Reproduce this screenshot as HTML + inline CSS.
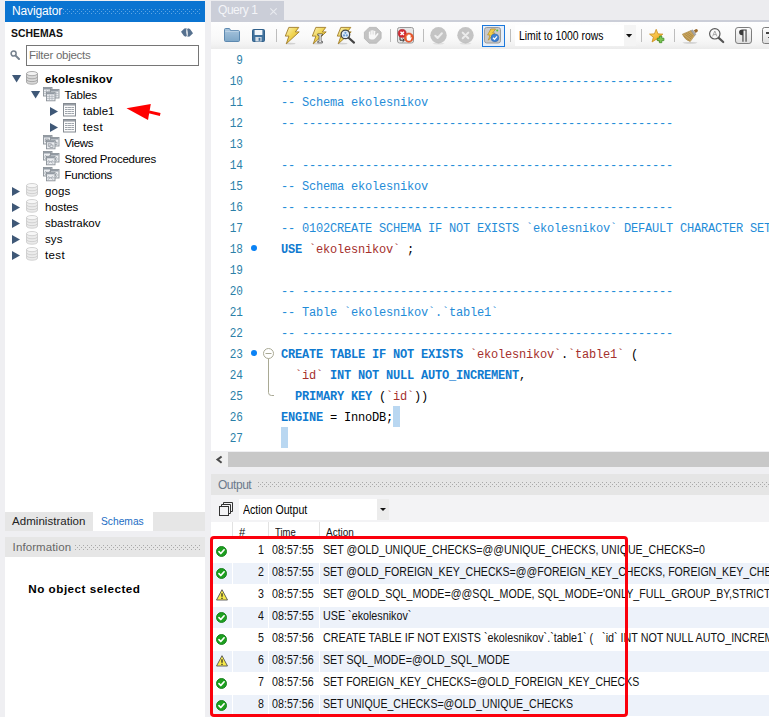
<!DOCTYPE html>
<html>
<head>
<meta charset="utf-8">
<style>
*{box-sizing:border-box;margin:0;padding:0}
html,body{width:769px;height:717px;overflow:hidden;background:#efeff2;font-family:"Liberation Sans",sans-serif;}
.abs{position:absolute}
#root{position:absolute;left:0;top:0;width:769px;height:717px;overflow:hidden;background:#efeff2}
.t{position:absolute;white-space:pre;transform-origin:0 50%;line-height:1}
/* left */
#navhead{left:5px;top:1px;width:200px;height:21px;background:#0b74d1}
#navbody{left:5px;top:22px;width:200px;height:490px;background:#fff}
#lefttabs{left:5px;top:512px;width:200px;height:19px;background:#e6e6e6}
#infohead{left:5px;top:537px;width:200px;height:20px;background:#e6e6e6}
#infobody{left:5px;top:557px;width:200px;height:160px;background:#fff}
.dots{position:absolute;height:7px;background-image:radial-gradient(circle,#b5b5b5 0.6px,transparent 0.9px);background-size:2px 2px}
.tree{font-size:12px;color:#111}
/* editor */
#tabbar{left:211px;top:0;width:558px;height:22px;background:#ececef}
#qtab{left:211px;top:1px;width:73px;height:20px;background:#cbced8}
#tabline{left:211px;top:20px;width:558px;height:1.7px;background:#cbced8}
#toolbar{left:211px;top:21.7px;width:558px;height:27.1px;background:linear-gradient(#fefefe 0%,#f9f9f9 60%,#f3f3f3 82%,#ebebeb 100%)}
#editor{left:211px;top:49px;width:558px;height:402px;background:#fff}
.ln{position:absolute;left:211px;width:32px;text-align:right;font-family:"Liberation Mono",monospace;font-size:12px;color:#2b7fa8;line-height:21px;height:21px;transform:scaleX(0.92);transform-origin:100% 50%}
.code{position:absolute;left:281px;font-family:"Liberation Mono",monospace;font-size:12px;letter-spacing:-0.2px;line-height:21px;height:21px;white-space:pre;color:#000}
.c{color:#1f8cd8}
.k{color:#0f7ad0;font-weight:bold}
.s{color:#a5302d}
.dot{position:absolute;left:251px;width:6px;height:6px;border-radius:3px;background:#0a82f5}
#hscroll{left:211px;top:451.6px;width:558px;height:15.3px;background:#f0f0f0}
#hthumb{left:228px;top:451.6px;width:541px;height:15.3px;background:#c8c8c8}
#outhead{left:211px;top:474px;width:558px;height:20.6px;background:#e5e5e5}
#outbar{left:211px;top:494.6px;width:558px;height:27.4px;background:#f3f3f5}
#outsel{left:239px;top:498.8px;width:150px;height:21px;background:#fff}
#outtable{left:211px;top:522px;width:558px;height:195px;background:#fff}
.row{position:absolute;left:211px;width:558px;height:22px}
.cell{position:absolute;top:0;height:21px;background:#edf2fa}
.ot{font-size:12px;color:#111}
.hl{background:#b9d7f1}
</style>
</head>
<body>
<div id="root">
<!-- LEFT -->
<div class="abs" id="navhead"></div>
<div class="abs" id="navbody"></div>
<div class="abs" id="lefttabs"></div>
<div class="abs" id="infohead"></div>
<div class="abs" id="infobody"></div>
<!-- EDITOR -->
<div class="abs" id="tabbar"></div>
<div class="abs" id="qtab"></div>
<div class="abs" id="tabline"></div>
<div class="abs" id="toolbar"></div>
<div class="abs" id="editor"></div>
<div class="abs" id="hscroll"></div>
<div class="abs" id="hthumb"></div>
<div class="abs" id="outhead"></div>
<div class="abs" id="outbar"></div>
<div class="abs" id="outsel"></div>
<div class="abs" id="outtable"></div>
<div class="t" id="m_k1" style="left:12px;top:5.20px;font-size:12px;color:#fff;letter-spacing:-0.151px;">Navigator</div>
<svg width="0" height="0" style="position:absolute"><defs><pattern id="dpb" width="4" height="4" patternUnits="userSpaceOnUse"><rect width="1" height="1" fill="#5fa6e4"/><rect x="2" y="2" width="1" height="1" fill="#5fa6e4"/></pattern><pattern id="dpg" width="4" height="4" patternUnits="userSpaceOnUse"><rect width="1" height="1" fill="#a9a9a9"/><rect x="2" y="2" width="1" height="1" fill="#a9a9a9"/></pattern></defs></svg>
<svg class="abs" style="left:63px;top:9px" width="137" height="5"><rect width="137" height="5" fill="url(#dpb)"/></svg>
<div class="t" id="m_k2" style="left:11px;top:28.00px;font-size:11.2px;color:#111;font-weight:bold;transform:scaleX(0.9293);">SCHEMAS</div>
<div class="abs" style="left:26px;top:45px;width:173px;height:20.5px;border:1px solid #767676;background:#fff"></div>
<div class="t" id="m_k3" style="left:29px;top:50.05px;font-size:11.5px;color:#6d6d6d;letter-spacing:-0.263px;">Filter objects</div>
<div class="t" id="m_k4" style="left:45px;top:74.05px;font-size:11.5px;color:#000;font-weight:bold;letter-spacing:0.151px;">ekolesnikov</div>
<div class="t" id="m_k5" style="left:64.5px;top:90.05px;font-size:11.5px;color:#000;letter-spacing:-0.125px;">Tables</div>
<div class="t" id="m_k6" style="left:83px;top:106.05px;font-size:11.5px;color:#000;letter-spacing:0.026px;">table1</div>
<div class="t" id="m_k7" style="left:83px;top:122.05px;font-size:11.5px;color:#000;letter-spacing:0.363px;">test</div>
<div class="t" id="m_k8" style="left:64.5px;top:138.05px;font-size:11.5px;color:#000;letter-spacing:-0.394px;">Views</div>
<div class="t" id="m_k9" style="left:64.5px;top:154.05px;font-size:11.5px;color:#000;letter-spacing:-0.258px;">Stored Procedures</div>
<div class="t" id="m_k10" style="left:64.5px;top:170.05px;font-size:11.5px;color:#000;letter-spacing:-0.262px;">Functions</div>
<div class="t" id="m_k11" style="left:45px;top:186.05px;font-size:11.5px;color:#000;letter-spacing:0.141px;">gogs</div>
<div class="t" id="m_k12" style="left:45px;top:202.05px;font-size:11.5px;color:#000;letter-spacing:-0.115px;">hostes</div>
<div class="t" id="m_k13" style="left:45px;top:218.05px;font-size:11.5px;color:#000;letter-spacing:-0.011px;">sbastrakov</div>
<div class="t" id="m_k14" style="left:45px;top:234.05px;font-size:11.5px;color:#000;letter-spacing:0.083px;">sys</div>
<div class="t" id="m_k15" style="left:45px;top:250.05px;font-size:11.5px;color:#000;letter-spacing:0.363px;">test</div>
<svg class="abs" style="left:12px;top:75px;overflow:visible" width="10" height="8" viewBox="0 0 10 8" ><path d="M0 0H9.2L4.6 7.6Z" fill="#3f5877"/></svg>
<svg class="abs" style="left:26px;top:71px;overflow:visible" width="12" height="14" viewBox="0 0 12 14" ><path d="M0.5 2.6V11C0.5 12.4 3 13.2 6 13.2S11.5 12.4 11.5 11V2.6Z" fill="#d9d9d9" stroke="#9b9b9b" stroke-width="0.8"/><path d="M0.5 5.6C0.5 7 3 7.8 6 7.8S11.5 7 11.5 5.6M0.5 8.4C0.5 9.8 3 10.6 6 10.6S11.5 9.8 11.5 8.4" fill="none" stroke="#9b9b9b" stroke-width="0.8"/><ellipse cx="6" cy="2.6" rx="5.5" ry="2.1" fill="#f2f2f2" stroke="#9b9b9b" stroke-width="0.8"/></svg>
<svg class="abs" style="left:31px;top:91.4px;overflow:visible" width="10" height="8" viewBox="0 0 10 8" ><path d="M0 0H9.2L4.6 7.6Z" fill="#3f5877"/></svg>
<svg class="abs" style="left:43px;top:87px;overflow:visible" width="16" height="14" viewBox="0 0 16 14" ><rect x="0.5" y="0.5" width="8.5" height="8.5" fill="#eceef1" stroke="#8b9198" stroke-width="0.9"/><rect x="1" y="1" width="7.5" height="1.5" fill="#929aa3"/><path d="M1 4.6h7.5M1 6.6h7.5M3.4 3v6M6 3v6" stroke="#aab0b8" stroke-width="0.7" fill="none"/><rect x="7.5" y="2.5" width="8.5" height="8.5" fill="#eceef1" stroke="#8b9198" stroke-width="0.9"/><rect x="8" y="3" width="7.5" height="1.5" fill="#929aa3"/><path d="M8 6.6h7.5M8 8.6h7.5M10.4 5v6M13 5v6" stroke="#aab0b8" stroke-width="0.7" fill="none"/><rect x="3.5" y="5.3" width="8.5" height="8.5" fill="#eceef1" stroke="#8b9198" stroke-width="0.9"/><rect x="4" y="5.8" width="7.5" height="1.5" fill="#929aa3"/><path d="M4 9.399999999999999h7.5M4 11.399999999999999h7.5M6.4 7.8v6M9 7.8v6" stroke="#aab0b8" stroke-width="0.7" fill="none"/></svg>
<svg class="abs" style="left:50px;top:107px;overflow:visible" width="8" height="9" viewBox="0 0 8 9" ><path d="M0 0L8 4.5L0 9Z" fill="#3f5877"/></svg>
<svg class="abs" style="left:63px;top:103px;overflow:visible" width="13" height="14" viewBox="0 0 13 14" ><rect x="0.5" y="0.5" width="12" height="12.5" fill="#fbfbfb" stroke="#858b92" stroke-width="1"/><rect x="1" y="1" width="11" height="1.6" fill="#9aa0a7"/><path d="M2 4.5h9M2 6.5h9M2 8.5h9M2 10.5h9" stroke="#9fa5ac" stroke-width="1"/><path d="M4.6 4v7.4M8.4 4v7.4" stroke="#fbfbfb" stroke-width="0.5" opacity="0.8"/></svg>
<svg class="abs" style="left:50px;top:123px;overflow:visible" width="8" height="9" viewBox="0 0 8 9" ><path d="M0 0L8 4.5L0 9Z" fill="#3f5877"/></svg>
<svg class="abs" style="left:63px;top:119px;overflow:visible" width="13" height="14" viewBox="0 0 13 14" ><rect x="0.5" y="0.5" width="12" height="12.5" fill="#fbfbfb" stroke="#858b92" stroke-width="1"/><rect x="1" y="1" width="11" height="1.6" fill="#9aa0a7"/><path d="M2 4.5h9M2 6.5h9M2 8.5h9M2 10.5h9" stroke="#9fa5ac" stroke-width="1"/><path d="M4.6 4v7.4M8.4 4v7.4" stroke="#fbfbfb" stroke-width="0.5" opacity="0.8"/></svg>
<svg class="abs" style="left:43px;top:135px;overflow:visible" width="16" height="14" viewBox="0 0 16 14" ><rect x="0.5" y="0.5" width="8.5" height="8.5" fill="#eceef1" stroke="#8b9198" stroke-width="0.9"/><rect x="1" y="1" width="7.5" height="1.5" fill="#929aa3"/><rect x="2.2" y="4" width="3" height="2.4" fill="none" stroke="#8a9098" stroke-width="0.7"/><rect x="4" y="5.2" width="3" height="2.4" fill="#e9ebee" stroke="#8a9098" stroke-width="0.7"/><rect x="7.5" y="2.5" width="8.5" height="8.5" fill="#eceef1" stroke="#8b9198" stroke-width="0.9"/><rect x="8" y="3" width="7.5" height="1.5" fill="#929aa3"/><rect x="9.2" y="6" width="3" height="2.4" fill="none" stroke="#8a9098" stroke-width="0.7"/><rect x="11" y="7.2" width="3" height="2.4" fill="#e9ebee" stroke="#8a9098" stroke-width="0.7"/><rect x="3.5" y="5.3" width="8.5" height="8.5" fill="#eceef1" stroke="#8b9198" stroke-width="0.9"/><rect x="4" y="5.8" width="7.5" height="1.5" fill="#929aa3"/><rect x="5.2" y="8.8" width="3" height="2.4" fill="none" stroke="#8a9098" stroke-width="0.7"/><rect x="7" y="10.0" width="3" height="2.4" fill="#e9ebee" stroke="#8a9098" stroke-width="0.7"/></svg>
<svg class="abs" style="left:43px;top:151px;overflow:visible" width="16" height="14" viewBox="0 0 16 14" ><rect x="0.5" y="0.5" width="8.5" height="8.5" fill="#eceef1" stroke="#8b9198" stroke-width="0.9"/><rect x="1" y="1" width="7.5" height="1.5" fill="#929aa3"/><path d="M2 4l2 2-2 2M7 4l-2 2 2 2M1 6h7.5" stroke="#9aa0a8" stroke-width="0.7" fill="none"/><rect x="7.5" y="2.5" width="8.5" height="8.5" fill="#eceef1" stroke="#8b9198" stroke-width="0.9"/><rect x="8" y="3" width="7.5" height="1.5" fill="#929aa3"/><path d="M9 6l2 2-2 2M14 6l-2 2 2 2M8 8h7.5" stroke="#9aa0a8" stroke-width="0.7" fill="none"/><rect x="3.5" y="5.3" width="8.5" height="8.5" fill="#eceef1" stroke="#8b9198" stroke-width="0.9"/><rect x="4" y="5.8" width="7.5" height="1.5" fill="#929aa3"/><path d="M5 8.8l2 2-2 2M10 8.8l-2 2 2 2M4 10.8h7.5" stroke="#9aa0a8" stroke-width="0.7" fill="none"/></svg>
<svg class="abs" style="left:43px;top:167px;overflow:visible" width="16" height="14" viewBox="0 0 16 14" ><rect x="0.5" y="0.5" width="8.5" height="8.5" fill="#eceef1" stroke="#8b9198" stroke-width="0.9"/><rect x="1" y="1" width="7.5" height="1.5" fill="#929aa3"/><path d="M2 4l2 2-2 2M7 4l-2 2 2 2M1 6h7.5" stroke="#9aa0a8" stroke-width="0.7" fill="none"/><rect x="7.5" y="2.5" width="8.5" height="8.5" fill="#eceef1" stroke="#8b9198" stroke-width="0.9"/><rect x="8" y="3" width="7.5" height="1.5" fill="#929aa3"/><path d="M9 6l2 2-2 2M14 6l-2 2 2 2M8 8h7.5" stroke="#9aa0a8" stroke-width="0.7" fill="none"/><rect x="3.5" y="5.3" width="8.5" height="8.5" fill="#eceef1" stroke="#8b9198" stroke-width="0.9"/><rect x="4" y="5.8" width="7.5" height="1.5" fill="#929aa3"/><path d="M5 8.8l2 2-2 2M10 8.8l-2 2 2 2M4 10.8h7.5" stroke="#9aa0a8" stroke-width="0.7" fill="none"/></svg>
<svg class="abs" style="left:12px;top:186.5px;overflow:visible" width="8" height="9" viewBox="0 0 8 9" ><path d="M0 0L8 4.5L0 9Z" fill="#3f5877"/></svg>
<svg class="abs" style="left:26px;top:183px;overflow:visible" width="12" height="14" viewBox="0 0 12 14" ><path d="M0.5 2.6V11C0.5 12.4 3 13.2 6 13.2S11.5 12.4 11.5 11V2.6Z" fill="#ebebeb" stroke="#c9c9c9" stroke-width="0.8"/><path d="M0.5 5.6C0.5 7 3 7.8 6 7.8S11.5 7 11.5 5.6M0.5 8.4C0.5 9.8 3 10.6 6 10.6S11.5 9.8 11.5 8.4" fill="none" stroke="#c9c9c9" stroke-width="0.8"/><ellipse cx="6" cy="2.6" rx="5.5" ry="2.1" fill="#f7f7f7" stroke="#c9c9c9" stroke-width="0.8"/></svg>
<svg class="abs" style="left:12px;top:202.5px;overflow:visible" width="8" height="9" viewBox="0 0 8 9" ><path d="M0 0L8 4.5L0 9Z" fill="#3f5877"/></svg>
<svg class="abs" style="left:26px;top:199px;overflow:visible" width="12" height="14" viewBox="0 0 12 14" ><path d="M0.5 2.6V11C0.5 12.4 3 13.2 6 13.2S11.5 12.4 11.5 11V2.6Z" fill="#ebebeb" stroke="#c9c9c9" stroke-width="0.8"/><path d="M0.5 5.6C0.5 7 3 7.8 6 7.8S11.5 7 11.5 5.6M0.5 8.4C0.5 9.8 3 10.6 6 10.6S11.5 9.8 11.5 8.4" fill="none" stroke="#c9c9c9" stroke-width="0.8"/><ellipse cx="6" cy="2.6" rx="5.5" ry="2.1" fill="#f7f7f7" stroke="#c9c9c9" stroke-width="0.8"/></svg>
<svg class="abs" style="left:12px;top:218.5px;overflow:visible" width="8" height="9" viewBox="0 0 8 9" ><path d="M0 0L8 4.5L0 9Z" fill="#3f5877"/></svg>
<svg class="abs" style="left:26px;top:215px;overflow:visible" width="12" height="14" viewBox="0 0 12 14" ><path d="M0.5 2.6V11C0.5 12.4 3 13.2 6 13.2S11.5 12.4 11.5 11V2.6Z" fill="#ebebeb" stroke="#c9c9c9" stroke-width="0.8"/><path d="M0.5 5.6C0.5 7 3 7.8 6 7.8S11.5 7 11.5 5.6M0.5 8.4C0.5 9.8 3 10.6 6 10.6S11.5 9.8 11.5 8.4" fill="none" stroke="#c9c9c9" stroke-width="0.8"/><ellipse cx="6" cy="2.6" rx="5.5" ry="2.1" fill="#f7f7f7" stroke="#c9c9c9" stroke-width="0.8"/></svg>
<svg class="abs" style="left:12px;top:234.5px;overflow:visible" width="8" height="9" viewBox="0 0 8 9" ><path d="M0 0L8 4.5L0 9Z" fill="#3f5877"/></svg>
<svg class="abs" style="left:26px;top:231px;overflow:visible" width="12" height="14" viewBox="0 0 12 14" ><path d="M0.5 2.6V11C0.5 12.4 3 13.2 6 13.2S11.5 12.4 11.5 11V2.6Z" fill="#ebebeb" stroke="#c9c9c9" stroke-width="0.8"/><path d="M0.5 5.6C0.5 7 3 7.8 6 7.8S11.5 7 11.5 5.6M0.5 8.4C0.5 9.8 3 10.6 6 10.6S11.5 9.8 11.5 8.4" fill="none" stroke="#c9c9c9" stroke-width="0.8"/><ellipse cx="6" cy="2.6" rx="5.5" ry="2.1" fill="#f7f7f7" stroke="#c9c9c9" stroke-width="0.8"/></svg>
<svg class="abs" style="left:12px;top:250.5px;overflow:visible" width="8" height="9" viewBox="0 0 8 9" ><path d="M0 0L8 4.5L0 9Z" fill="#3f5877"/></svg>
<svg class="abs" style="left:26px;top:247px;overflow:visible" width="12" height="14" viewBox="0 0 12 14" ><path d="M0.5 2.6V11C0.5 12.4 3 13.2 6 13.2S11.5 12.4 11.5 11V2.6Z" fill="#ebebeb" stroke="#c9c9c9" stroke-width="0.8"/><path d="M0.5 5.6C0.5 7 3 7.8 6 7.8S11.5 7 11.5 5.6M0.5 8.4C0.5 9.8 3 10.6 6 10.6S11.5 9.8 11.5 8.4" fill="none" stroke="#c9c9c9" stroke-width="0.8"/><ellipse cx="6" cy="2.6" rx="5.5" ry="2.1" fill="#f7f7f7" stroke="#c9c9c9" stroke-width="0.8"/></svg>
<svg class="abs" style="left:0;top:0" width="205" height="130"><path d="M126.5 108.3L150.8 104.1L148 119.9Z" fill="#ff0000"/><path d="M149 111.9L160.2 114.5" stroke="#ff0000" stroke-width="2.9"/></svg>
<svg class="abs" style="left:10px;top:50px;overflow:visible" width="11" height="11" viewBox="0 0 11 11" ><circle cx="3.6" cy="3.6" r="2.5" fill="none" stroke="#76828f" stroke-width="1.5"/><path d="M5.6 5.6L9 9" stroke="#76828f" stroke-width="2" stroke-linecap="round"/></svg>
<svg class="abs" style="left:181px;top:27.5px;overflow:visible" width="12" height="9" viewBox="0 0 12 9" ><path d="M3.4 0.5L5.7 0.2Q5 2.4 5.3 4.4Q5.5 6.4 5.9 7.6L5 8.7L3 7.9L0 3.7Z" fill="#56718f"/><path d="M3.4 0.5L5.7 0.2Q5 2.4 5.3 4.4Q5.5 6.4 5.9 7.6L5 8.7L3 7.9L0 3.7Z" fill="#56718f" transform="rotate(180 6 4.45)"/></svg>
<div class="abs" style="left:93px;top:512px;width:60px;height:19px;background:#fff"></div>
<div class="t" id="m_k16" style="left:12px;top:516.05px;font-size:11.5px;color:#222;letter-spacing:0.045px;">Administration</div>
<div class="t" id="m_k17" style="left:100.6px;top:516.05px;font-size:11.5px;color:#1c6dc4;transform:scaleX(0.8907);">Schemas</div>
<div class="t" id="m_k18" style="left:12.6px;top:542.05px;font-size:11.5px;color:#666;letter-spacing:0.097px;">Information</div>
<svg class="abs" style="left:75px;top:545px" width="126" height="5"><rect width="126" height="5" fill="url(#dpg)"/></svg>
<div class="t" id="m_k19" style="left:28.3px;top:582.65px;font-size:11.7px;color:#000;font-weight:bold;letter-spacing:0.495px;">No object selected</div>
<svg class="abs" style="left:224px;top:28px;overflow:visible" width="16" height="14" viewBox="0 0 16 14" ><defs><linearGradient id="gfo" x1="0" y1="0" x2="0" y2="1"><stop offset="0" stop-color="#a9c6de"/><stop offset="1" stop-color="#7ea7c8"/></linearGradient></defs><path d="M0.5 1.6Q0.5 0.5 1.6 0.5H5Q5.9 0.5 6.2 1.5L6.6 2.6H14.4Q15.5 2.6 15.5 3.7V12.4Q15.5 13.5 14.4 13.5H1.6Q0.5 13.5 0.5 12.4Z" fill="url(#gfo)" stroke="#5d89b0" stroke-width="1"/><path d="M1.2 3.4H14.8" stroke="#c5d9ea" stroke-width="0.8"/></svg>
<svg class="abs" style="left:252.2px;top:29px;overflow:visible" width="13" height="13" viewBox="0 0 13 13" ><rect x="0.5" y="0.5" width="12" height="12" rx="1" fill="#41729d" stroke="#2f5f8a" stroke-width="1"/><rect x="2.6" y="1" width="7.8" height="5" fill="#f2f6fa"/><rect x="3.4" y="8" width="6.2" height="4.5" fill="#d5dde6"/><rect x="6.6" y="8.8" width="1.8" height="3" fill="#41729d"/></svg>
<div class="abs" style="left:276px;top:29px;width:1px;height:13px;background:#bdbdbd"></div>
<svg class="abs" style="left:285px;top:26.6px;overflow:visible" width="15" height="17" viewBox="0 0 15 17" ><defs><linearGradient id="gb" x1="0" y1="0" x2="1" y2="1"><stop offset="0" stop-color="#fbf3c0"/><stop offset="0.45" stop-color="#f1d655"/><stop offset="1" stop-color="#dcae2a"/></linearGradient></defs><ellipse cx="5.5" cy="16.6" rx="5" ry="0.9" fill="#000" opacity="0.14"/><path d="M3.8 0.4H13.8L10.3 4.9H14.2L1.3 16.8L3.9 9.1H0.3Z" fill="url(#gb)" stroke="#a07c28" stroke-width="0.9" stroke-linejoin="round"/></svg>
<svg class="abs" style="left:311.6px;top:26.6px;overflow:visible" width="15" height="17" viewBox="0 0 15 17" ><defs><linearGradient id="gb" x1="0" y1="0" x2="1" y2="1"><stop offset="0" stop-color="#fbf3c0"/><stop offset="0.45" stop-color="#f1d655"/><stop offset="1" stop-color="#dcae2a"/></linearGradient></defs><ellipse cx="5.5" cy="16.6" rx="5" ry="0.9" fill="#000" opacity="0.14"/><path d="M3.8 0.4H13.8L10.3 4.9H14.2L1.3 16.8L3.9 9.1H0.3Z" fill="url(#gb)" stroke="#a07c28" stroke-width="0.9" stroke-linejoin="round"/><path d="M5.7 6.9H10.5V8.3H9.1V14.4H10.5V15.8H5.7V14.4H7.1V8.3H5.7Z" fill="#fff" stroke="#3c3c3c" stroke-width="0.7"/></svg>
<svg class="abs" style="left:337px;top:26.6px;overflow:visible" width="15" height="17" viewBox="0 0 15 17" ><defs><linearGradient id="gb" x1="0" y1="0" x2="1" y2="1"><stop offset="0" stop-color="#fbf3c0"/><stop offset="0.45" stop-color="#f1d655"/><stop offset="1" stop-color="#dcae2a"/></linearGradient></defs><ellipse cx="5.5" cy="16.6" rx="5" ry="0.9" fill="#000" opacity="0.14"/><path d="M3.8 0.4H13.8L10.3 4.9H14.2L1.3 16.8L3.9 9.1H0.3Z" fill="url(#gb)" stroke="#a07c28" stroke-width="0.9" stroke-linejoin="round"/><circle cx="8.4" cy="7.4" r="4.3" fill="#dce9f7" stroke="#444" stroke-width="1.3"/><circle cx="7" cy="8.4" r="1.1" fill="#6f9fd6"/><circle cx="9.8" cy="8.4" r="1.1" fill="#6f9fd6"/><circle cx="8.4" cy="5.8" r="1.1" fill="#6f9fd6"/><path d="M11.6 10.8L17 15.6" stroke="#444" stroke-width="2.2" stroke-linecap="round"/></svg>
<svg class="abs" style="left:363.7px;top:26.7px;overflow:visible" width="18" height="17" viewBox="0 0 18 17" ><path d="M5.2 0.4H12.3L17.1 5.2V11.6L12.3 16.2H5.2L0.4 11.6V5.2Z" fill="#c3c3c3" stroke="#b3b3b3" stroke-width="0.8"/><g fill="#f7f7f7"><rect x="4.9" y="4.4" width="1.35" height="5" rx="0.65"/><rect x="6.55" y="3.3" width="1.35" height="6" rx="0.65"/><rect x="8.2" y="3" width="1.35" height="6" rx="0.65"/><rect x="9.85" y="3.7" width="1.35" height="6" rx="0.65"/><path d="M4.9 7.6H11.2V10.6Q11.2 12.6 9.2 12.6H7.4Q4.9 12.6 4.9 10.2Z"/><path d="M10.6 9.6L13 6.4Q13.6 5.8 14.2 6.3T14.3 7.4L11.2 11.6Z"/></g></svg>
<div class="abs" style="left:390px;top:29px;width:1px;height:13px;background:#bdbdbd"></div>
<svg class="abs" style="left:396.8px;top:27px;overflow:visible" width="17" height="17" viewBox="0 0 17 17" ><rect x="0.5" y="0.5" width="16" height="15.5" rx="2" fill="#e7e7e7" stroke="#9a9a9a" stroke-width="1"/><path d="M3 9.5V13.2H7M5.6 11.6L7.4 13.2L5.6 14.8" fill="none" stroke="#333" stroke-width="1"/><circle cx="5.2" cy="6.4" r="4" fill="#d42a33" stroke="#a81c25" stroke-width="0.6"/><path d="M3.5 4.7L6.9 8.1M6.9 4.7L3.5 8.1" stroke="#fff" stroke-width="1.4"/><circle cx="11.8" cy="10.6" r="4.6" fill="#ea5a2e" stroke="#d1431e" stroke-width="0.6"/><path d="M9.6 11V9Q9.6 8.4 10.1 8.4T10.6 9V8Q10.6 7.5 11.1 7.5T11.6 8V7.7Q11.6 7.2 12.1 7.2T12.6 7.7V8.2Q12.6 7.7 13.1 7.7T13.6 8.3V11L14.3 10.2L14.9 10.6L13.6 13.2Q13.3 13.8 12.5 13.8H11.4Q10.3 13.8 9.9 12.8Z" fill="#fff"/></svg>
<div class="abs" style="left:423px;top:29px;width:1px;height:13px;background:#bdbdbd"></div>
<svg class="abs" style="left:430px;top:27px;overflow:visible" width="17" height="17" viewBox="0 0 17 17" ><circle cx="8.5" cy="8.3" r="8.2" fill="#c4c4c4"/><ellipse cx="8.5" cy="16.6" rx="6" ry="0.8" fill="#000" opacity="0.08"/><path d="M5.3 8.8L7.6 11L11.9 6.3" fill="none" stroke="#ececec" stroke-width="2" stroke-linecap="round" stroke-linejoin="round"/></svg>
<svg class="abs" style="left:457.1px;top:27px;overflow:visible" width="17" height="17" viewBox="0 0 17 17" ><circle cx="8.5" cy="8.3" r="8.2" fill="#c4c4c4"/><ellipse cx="8.5" cy="16.6" rx="6" ry="0.8" fill="#000" opacity="0.08"/><path d="M5.7 5.6L11.3 11.2M11.3 5.6L5.7 11.2" fill="none" stroke="#ececec" stroke-width="2" stroke-linecap="round"/></svg>
<div class="abs" style="left:482px;top:25.2px;width:23px;height:21.5px;border:1px solid #1b78dc;background:#e6eef8"></div>
<svg class="abs" style="left:484.2px;top:27.4px;overflow:visible" width="17" height="17" viewBox="0 0 17 17" ><rect x="0.5" y="0.5" width="16" height="15.5" rx="2.2" fill="#c9c9c9" stroke="#9b9b9b" stroke-width="1"/><path d="M6.8 2H11.6L8.6 6H10.8L4.4 13.2L6 8H3.6Z" fill="#f2cd47" stroke="#b08a2c" stroke-width="0.7" stroke-linejoin="round"/><circle cx="10.9" cy="10.8" r="3.9" fill="#3f83d4" stroke="#2b67b4" stroke-width="0.6"/><path d="M9 10.8L10.5 12.3L13 9.4" fill="none" stroke="#fff" stroke-width="1.3"/><circle cx="13.2" cy="3.4" r="1" fill="#52c33a"/></svg>
<div class="abs" style="left:510px;top:29px;width:1px;height:13px;background:#bdbdbd"></div>
<div class="abs" style="left:515px;top:25px;width:121px;height:21px;background:#fff"></div>
<div class="abs" style="left:624px;top:25px;width:12px;height:21px;background:#f4f4f4"></div>
<svg class="abs" style="left:626.3px;top:34px;overflow:visible" width="6.2" height="3.6" viewBox="0 0 6.2 3.6" ><path d="M0 0H6.2L3.1 3.4Z" fill="#111"/></svg>
<div class="t" id="m_k20" style="left:519px;top:29.50px;font-size:12px;color:#000;transform:scaleX(0.8666);">Limit to 1000 rows</div>
<div class="abs" style="left:641px;top:29px;width:1px;height:13px;background:#bdbdbd"></div>
<svg class="abs" style="left:649px;top:29px;overflow:visible" width="16" height="15" viewBox="0 0 16 15" ><defs><linearGradient id="gs" x1="0" y1="0" x2="0.6" y2="1"><stop offset="0" stop-color="#fde27a"/><stop offset="1" stop-color="#f2a61c"/></linearGradient></defs><path d="M7.2 0.3L8.96 4.87L13.86 5.14L10.05 8.23L11.31 12.96L7.2 10.3L3.09 12.96L4.35 8.23L0.54 5.14L5.44 4.87Z" fill="url(#gs)" stroke="#c98d1d" stroke-width="0.8" stroke-linejoin="round"/><path d="M12 8.5H14.4V10.6H16.5V13H14.4V15.1H12V13H9.9V10.6H12Z" transform="translate(-1.6,-1.4)" fill="#7bc653" stroke="#3f8e25" stroke-width="0.8" stroke-linejoin="round"/></svg>
<div class="abs" style="left:674px;top:29px;width:1px;height:13px;background:#bdbdbd"></div>
<svg class="abs" style="left:681.6px;top:29px;overflow:visible" width="16" height="14" viewBox="0 0 16 14" ><ellipse cx="8" cy="13.8" rx="7.5" ry="0.9" fill="#000" opacity="0.15"/><path d="M0.3 5.2L9 1.6L12.6 6.6L8.2 12.6Q3.4 11.4 0.3 5.2Z" fill="#c9a55e" stroke="#a8853f" stroke-width="0.6"/><path d="M2.4 5L9 9.8M4.2 4.2L10 8.4M1.6 7L7.6 11.4M6 3.4L11 7.2" stroke="#9d7a38" stroke-width="0.6"/><path d="M9 1.6L10.6 0.8L14 5.4L12.6 6.6Z" fill="#a9a9a9" stroke="#8a8a8a" stroke-width="0.5"/><path d="M11.8 1.6L13.6 0.2Q14.8 -0.2 15.6 0.8T15.4 2.8L13.6 4Z" fill="#9a6a2c"/></svg>
<svg class="abs" style="left:708.6px;top:28.4px;overflow:visible" width="15" height="15" viewBox="0 0 15 15" ><path d="M9.4 9.6L14.2 14" stroke="#555" stroke-width="2.2" stroke-linecap="round"/><circle cx="5.8" cy="5.8" r="5.2" fill="#fafafa" stroke="#5a5a5a" stroke-width="1.2"/><path d="M3.6 8.4L5.8 3L8 8.4M4.4 6.6H7.2" fill="none" stroke="#a0a0a0" stroke-width="0.9"/></svg>
<svg class="abs" style="left:735px;top:27px;overflow:visible" width="17" height="17" viewBox="0 0 17 17" ><defs><linearGradient id="gp" x1="0" y1="0" x2="0" y2="1"><stop offset="0" stop-color="#fdfdfd"/><stop offset="1" stop-color="#dedede"/></linearGradient></defs><rect x="0.5" y="0.5" width="16" height="16" rx="2.6" fill="url(#gp)" stroke="#7d7d7d" stroke-width="1"/><path d="M7.4 14.7V8.3Q4.1 8.1 4.1 5.3Q4.1 2.5 7.4 2.5H11.7V3.4H11.6V14.7H10.5V3.4H8.5V14.7Z" fill="#3a3a3a"/></svg>
<div class="abs" style="left:762px;top:27px;width:17px;height:17px;border:1px solid #7d7d7d;border-radius:2.6px;background:linear-gradient(#fdfdfd,#dedede)"></div>
<div class="abs" style="left:766px;top:32.2px;width:4px;height:1.6px;background:#444"></div>
<div class="abs" style="left:767.8px;top:37.2px;width:2px;height:1px;background:#555"></div>
<svg class="abs" style="left:270px;top:7.5px;overflow:visible" width="7" height="7" viewBox="0 0 7 7" ><path d="M0.3 0.3L6.7 6.7M6.7 0.3L0.3 6.7" stroke="#e9ebf0" stroke-width="1.1" fill="none"/></svg>
<div class="t" id="m_k21" style="left:218px;top:4.00px;font-size:12px;color:#f4f5f8;letter-spacing:-0.455px;">Query 1</div>
<div class="abs" style="left:393px;top:406px;width:7px;height:21px;background:#b9d7f1"></div>
<div class="abs" style="left:281px;top:427px;width:7px;height:21px;background:#b9d7f1"></div>
<div class="ln" style="top:50.6px">9</div>
<div class="ln" style="top:71.6px">10</div>
<div class="code" id="m_l10" style="top:71.7px"><span class="c">-- -----------------------------------------------------</span></div>
<div class="ln" style="top:92.6px">11</div>
<div class="code" id="m_l11" style="top:92.7px"><span class="c">-- Schema ekolesnikov</span></div>
<div class="ln" style="top:113.6px">12</div>
<div class="code" id="m_l12" style="top:113.7px"><span class="c">-- -----------------------------------------------------</span></div>
<div class="ln" style="top:134.6px">13</div>
<div class="ln" style="top:155.6px">14</div>
<div class="code" id="m_l14" style="top:155.7px"><span class="c">-- -----------------------------------------------------</span></div>
<div class="ln" style="top:176.6px">15</div>
<div class="code" id="m_l15" style="top:176.7px"><span class="c">-- Schema ekolesnikov</span></div>
<div class="ln" style="top:197.6px">16</div>
<div class="code" id="m_l16" style="top:197.7px"><span class="c">-- -----------------------------------------------------</span></div>
<div class="ln" style="top:218.6px">17</div>
<div class="code" id="m_l17" style="top:218.7px"><span class="c">-- 0102CREATE SCHEMA IF NOT EXISTS `ekolesnikov` DEFAULT CHARACTER SET utf8</span></div>
<div class="ln" style="top:239.6px">18</div>
<div class="code" id="m_l18" style="top:239.7px"><span class="k">USE</span> <span class="s">`ekolesnikov`</span> ;</div>
<div class="ln" style="top:260.6px">19</div>
<div class="ln" style="top:281.6px">20</div>
<div class="code" id="m_l20" style="top:281.7px"><span class="c">-- -----------------------------------------------------</span></div>
<div class="ln" style="top:302.6px">21</div>
<div class="code" id="m_l21" style="top:302.7px"><span class="c">-- Table `ekolesnikov`.`table1`</span></div>
<div class="ln" style="top:323.6px">22</div>
<div class="code" id="m_l22" style="top:323.7px"><span class="c">-- -----------------------------------------------------</span></div>
<div class="ln" style="top:344.6px">23</div>
<div class="code" id="m_l23" style="top:344.7px"><span class="k">CREATE TABLE IF NOT EXISTS</span> <span class="s">`ekolesnikov`</span>.<span class="s">`table1`</span> (</div>
<div class="ln" style="top:365.6px">24</div>
<div class="code" id="m_l24" style="top:365.7px">  <span class="s">`id`</span> <span class="k">INT NOT NULL AUTO_INCREMENT</span>,</div>
<div class="ln" style="top:386.6px">25</div>
<div class="code" id="m_l25" style="top:386.7px">  <span class="k">PRIMARY KEY</span> (<span class="s">`id`</span>))</div>
<div class="ln" style="top:407.6px">26</div>
<div class="code" id="m_l26" style="top:407.7px"><span class="k">ENGINE</span> = InnoDB;</div>
<div class="ln" style="top:428.6px">27</div>
<div class="dot" style="top:245.4px"></div>
<div class="dot" style="top:350.4px"></div>
<svg class="abs" style="left:262px;top:347px;overflow:visible" width="13" height="49" viewBox="0 0 13 49" ><circle cx="6.5" cy="6.5" r="5" fill="#fff" stroke="#a9a994" stroke-width="1"/><path d="M3.5 6.5H9.5" stroke="#a9a994" stroke-width="1"/><path d="M6.5 11.6V45.6Q6.5 48.5 9.5 48.5H12" fill="none" stroke="#a9a994" stroke-width="1"/></svg>
<svg class="abs" style="left:216px;top:456px;overflow:visible" width="7" height="7.4" viewBox="0 0 7 7.4" ><path d="M5.6 0.5L1.5 3.6L5.6 6.7" fill="none" stroke="#4a4a4a" stroke-width="2"/></svg>
<svg class="abs" style="left:219px;top:502px;overflow:visible" width="14" height="14" viewBox="0 0 14 14" ><path d="M4.5 2.5V0.5H13.5V9.5H11.5" fill="none" stroke="#333" stroke-width="1"/><path d="M2.5 4.5V2.5H11.5V11.5H9.5" fill="none" stroke="#333" stroke-width="1"/><rect x="0.5" y="4.5" width="9" height="9" fill="#f3f3f5" stroke="#333" stroke-width="1"/></svg>
<div class="t" id="m_k22" style="left:218px;top:479.00px;font-size:12px;color:#6c7a8c;letter-spacing:-0.464px;">Output</div>
<svg class="abs" style="left:258px;top:482px" width="511" height="5"><rect width="511" height="5" fill="url(#dpg)"/></svg>
<div class="abs" style="left:377px;top:498.8px;width:12px;height:21px;background:#ececec"></div>
<svg class="abs" style="left:380px;top:508px;overflow:visible" width="6" height="3" viewBox="0 0 6 3" ><path d="M0 0H6L3 3Z" fill="#111"/></svg>
<div class="t" id="m_k23" style="left:243.25px;top:503.75px;font-size:12.5px;color:#000;transform:scaleX(0.8482);">Action Output</div>
<div class="abs" style="left:232px;top:522px;width:1px;height:16px;background:#e2e2e2"></div>
<div class="abs" style="left:268px;top:522px;width:1px;height:16px;background:#e2e2e2"></div>
<div class="abs" style="left:319px;top:522px;width:1px;height:16px;background:#e2e2e2"></div>
<div class="t" id="m_k24" style="left:239px;top:526.50px;font-size:11px;color:#111;transform:scaleX(1.0204);">#</div>
<div class="t" id="m_k25" style="left:275.25px;top:526.50px;font-size:11px;color:#111;transform:scaleX(0.8629);">Time</div>
<div class="t" id="m_k26" style="left:326.25px;top:526.50px;font-size:11px;color:#111;transform:scaleX(0.9075);">Action</div>
<svg class="abs" style="left:216.0px;top:546.0px;overflow:visible" width="11" height="11" viewBox="0 0 11 11" ><circle cx="5.5" cy="5.5" r="5" fill="#1da01f" stroke="#117a16" stroke-width="0.9"/><path d="M3 5.7L4.8 7.5L8.1 3.8" fill="none" stroke="#fff" stroke-width="1.7" stroke-linecap="round" stroke-linejoin="round"/></svg>
<div class="t" id="m_k27" style="left:257.8px;top:543.85px;font-size:12.5px;color:#111;transform:scaleX(0.8485);">1</div>
<div class="t" id="m_k28" style="left:272.3px;top:543.85px;font-size:12.5px;color:#111;transform:scaleX(0.8568);">08:57:55</div>
<div class="t" id="m_k29" style="left:323.3px;top:543.85px;font-size:12.5px;color:#111;transform:scaleX(0.8491);">SET @OLD_UNIQUE_CHECKS=@@UNIQUE_CHECKS, UNIQUE_CHECKS=0</div>
<div class="row" style="top:563px"><div class="cell" style="left:0;width:21px"></div><div class="cell" style="left:22px;width:35px"></div><div class="cell" style="left:58px;width:50px"></div><div class="cell" style="left:109px;width:449px"></div></div>
<svg class="abs" style="left:216.0px;top:568.0px;overflow:visible" width="11" height="11" viewBox="0 0 11 11" ><circle cx="5.5" cy="5.5" r="5" fill="#1da01f" stroke="#117a16" stroke-width="0.9"/><path d="M3 5.7L4.8 7.5L8.1 3.8" fill="none" stroke="#fff" stroke-width="1.7" stroke-linecap="round" stroke-linejoin="round"/></svg>
<div class="t" id="m_k30" style="left:257.8px;top:565.85px;font-size:12.5px;color:#111;transform:scaleX(0.8485);">2</div>
<div class="t" id="m_k31" style="left:272.3px;top:565.85px;font-size:12.5px;color:#111;transform:scaleX(0.8568);">08:57:55</div>
<div class="t" id="m_k32" style="left:323.3px;top:565.85px;font-size:12.5px;color:#111;transform:scaleX(0.845);">SET @OLD_FOREIGN_KEY_CHECKS=@@FOREIGN_KEY_CHECKS, FOREIGN_KEY_CHECKS=0</div>
<svg class="abs" style="left:215.6px;top:589px;overflow:visible" width="12" height="12" viewBox="0 0 12 12" ><path d="M6 0.7L11.5 11H0.5Z" fill="#f6e94a" stroke="#555" stroke-width="0.9" stroke-linejoin="round"/><path d="M6 4.2V7.8M6 8.8V9.9" stroke="#222" stroke-width="1.2"/></svg>
<div class="t" id="m_k33" style="left:257.8px;top:587.85px;font-size:12.5px;color:#111;transform:scaleX(0.8485);">3</div>
<div class="t" id="m_k34" style="left:272.3px;top:587.85px;font-size:12.5px;color:#111;transform:scaleX(0.8568);">08:57:55</div>
<div class="t" id="m_k35" style="left:323.3px;top:587.85px;font-size:12.5px;color:#111;transform:scaleX(0.853);">SET @OLD_SQL_MODE=@@SQL_MODE, SQL_MODE='ONLY_FULL_GROUP_BY,STRICT_TRANS_TABLES'</div>
<div class="row" style="top:607px"><div class="cell" style="left:0;width:21px"></div><div class="cell" style="left:22px;width:35px"></div><div class="cell" style="left:58px;width:50px"></div><div class="cell" style="left:109px;width:449px"></div></div>
<svg class="abs" style="left:216.0px;top:612.0px;overflow:visible" width="11" height="11" viewBox="0 0 11 11" ><circle cx="5.5" cy="5.5" r="5" fill="#1da01f" stroke="#117a16" stroke-width="0.9"/><path d="M3 5.7L4.8 7.5L8.1 3.8" fill="none" stroke="#fff" stroke-width="1.7" stroke-linecap="round" stroke-linejoin="round"/></svg>
<div class="t" id="m_k36" style="left:257.8px;top:609.85px;font-size:12.5px;color:#111;transform:scaleX(0.8485);">4</div>
<div class="t" id="m_k37" style="left:272.3px;top:609.85px;font-size:12.5px;color:#111;transform:scaleX(0.8568);">08:57:55</div>
<div class="t" id="m_k38" style="left:323.3px;top:609.85px;font-size:12.5px;color:#111;transform:scaleX(0.8597);">USE `ekolesnikov`</div>
<svg class="abs" style="left:216.0px;top:634.0px;overflow:visible" width="11" height="11" viewBox="0 0 11 11" ><circle cx="5.5" cy="5.5" r="5" fill="#1da01f" stroke="#117a16" stroke-width="0.9"/><path d="M3 5.7L4.8 7.5L8.1 3.8" fill="none" stroke="#fff" stroke-width="1.7" stroke-linecap="round" stroke-linejoin="round"/></svg>
<div class="t" id="m_k39" style="left:257.8px;top:631.85px;font-size:12.5px;color:#111;transform:scaleX(0.8485);">5</div>
<div class="t" id="m_k40" style="left:272.3px;top:631.85px;font-size:12.5px;color:#111;transform:scaleX(0.8568);">08:57:56</div>
<div class="t" id="m_k41" style="left:323.3px;top:631.85px;font-size:12.5px;color:#111;transform:scaleX(0.859);">CREATE TABLE IF NOT EXISTS `ekolesnikov`.`table1` (   `id` INT NOT NULL AUTO_INCREMENT,  PRIMARY</div>
<div class="row" style="top:651px"><div class="cell" style="left:0;width:21px"></div><div class="cell" style="left:22px;width:35px"></div><div class="cell" style="left:58px;width:50px"></div><div class="cell" style="left:109px;width:449px"></div></div>
<svg class="abs" style="left:215.6px;top:655px;overflow:visible" width="12" height="12" viewBox="0 0 12 12" ><path d="M6 0.7L11.5 11H0.5Z" fill="#f6e94a" stroke="#555" stroke-width="0.9" stroke-linejoin="round"/><path d="M6 4.2V7.8M6 8.8V9.9" stroke="#222" stroke-width="1.2"/></svg>
<div class="t" id="m_k42" style="left:257.8px;top:653.85px;font-size:12.5px;color:#111;transform:scaleX(0.8485);">6</div>
<div class="t" id="m_k43" style="left:272.3px;top:653.85px;font-size:12.5px;color:#111;transform:scaleX(0.8568);">08:57:56</div>
<div class="t" id="m_k44" style="left:323.3px;top:653.85px;font-size:12.5px;color:#111;transform:scaleX(0.8520);">SET SQL_MODE=@OLD_SQL_MODE</div>
<svg class="abs" style="left:216.0px;top:678.0px;overflow:visible" width="11" height="11" viewBox="0 0 11 11" ><circle cx="5.5" cy="5.5" r="5" fill="#1da01f" stroke="#117a16" stroke-width="0.9"/><path d="M3 5.7L4.8 7.5L8.1 3.8" fill="none" stroke="#fff" stroke-width="1.7" stroke-linecap="round" stroke-linejoin="round"/></svg>
<div class="t" id="m_k45" style="left:257.8px;top:675.85px;font-size:12.5px;color:#111;transform:scaleX(0.8485);">7</div>
<div class="t" id="m_k46" style="left:272.3px;top:675.85px;font-size:12.5px;color:#111;transform:scaleX(0.8568);">08:57:56</div>
<div class="t" id="m_k47" style="left:323.3px;top:675.85px;font-size:12.5px;color:#111;transform:scaleX(0.8407);">SET FOREIGN_KEY_CHECKS=@OLD_FOREIGN_KEY_CHECKS</div>
<div class="row" style="top:695px"><div class="cell" style="left:0;width:21px"></div><div class="cell" style="left:22px;width:35px"></div><div class="cell" style="left:58px;width:50px"></div><div class="cell" style="left:109px;width:449px"></div></div>
<svg class="abs" style="left:216.0px;top:700.0px;overflow:visible" width="11" height="11" viewBox="0 0 11 11" ><circle cx="5.5" cy="5.5" r="5" fill="#1da01f" stroke="#117a16" stroke-width="0.9"/><path d="M3 5.7L4.8 7.5L8.1 3.8" fill="none" stroke="#fff" stroke-width="1.7" stroke-linecap="round" stroke-linejoin="round"/></svg>
<div class="t" id="m_k48" style="left:257.8px;top:697.85px;font-size:12.5px;color:#111;transform:scaleX(0.8485);">8</div>
<div class="t" id="m_k49" style="left:272.3px;top:697.85px;font-size:12.5px;color:#111;transform:scaleX(0.8568);">08:57:56</div>
<div class="t" id="m_k50" style="left:323.3px;top:697.85px;font-size:12.5px;color:#111;transform:scaleX(0.8463);">SET UNIQUE_CHECKS=@OLD_UNIQUE_CHECKS</div>
<div class="abs" style="left:209.5px;top:536px;width:418.8px;height:180.5px;border:3.7px solid #fb000c;border-radius:4px"></div>
</div>
</body>
</html>
